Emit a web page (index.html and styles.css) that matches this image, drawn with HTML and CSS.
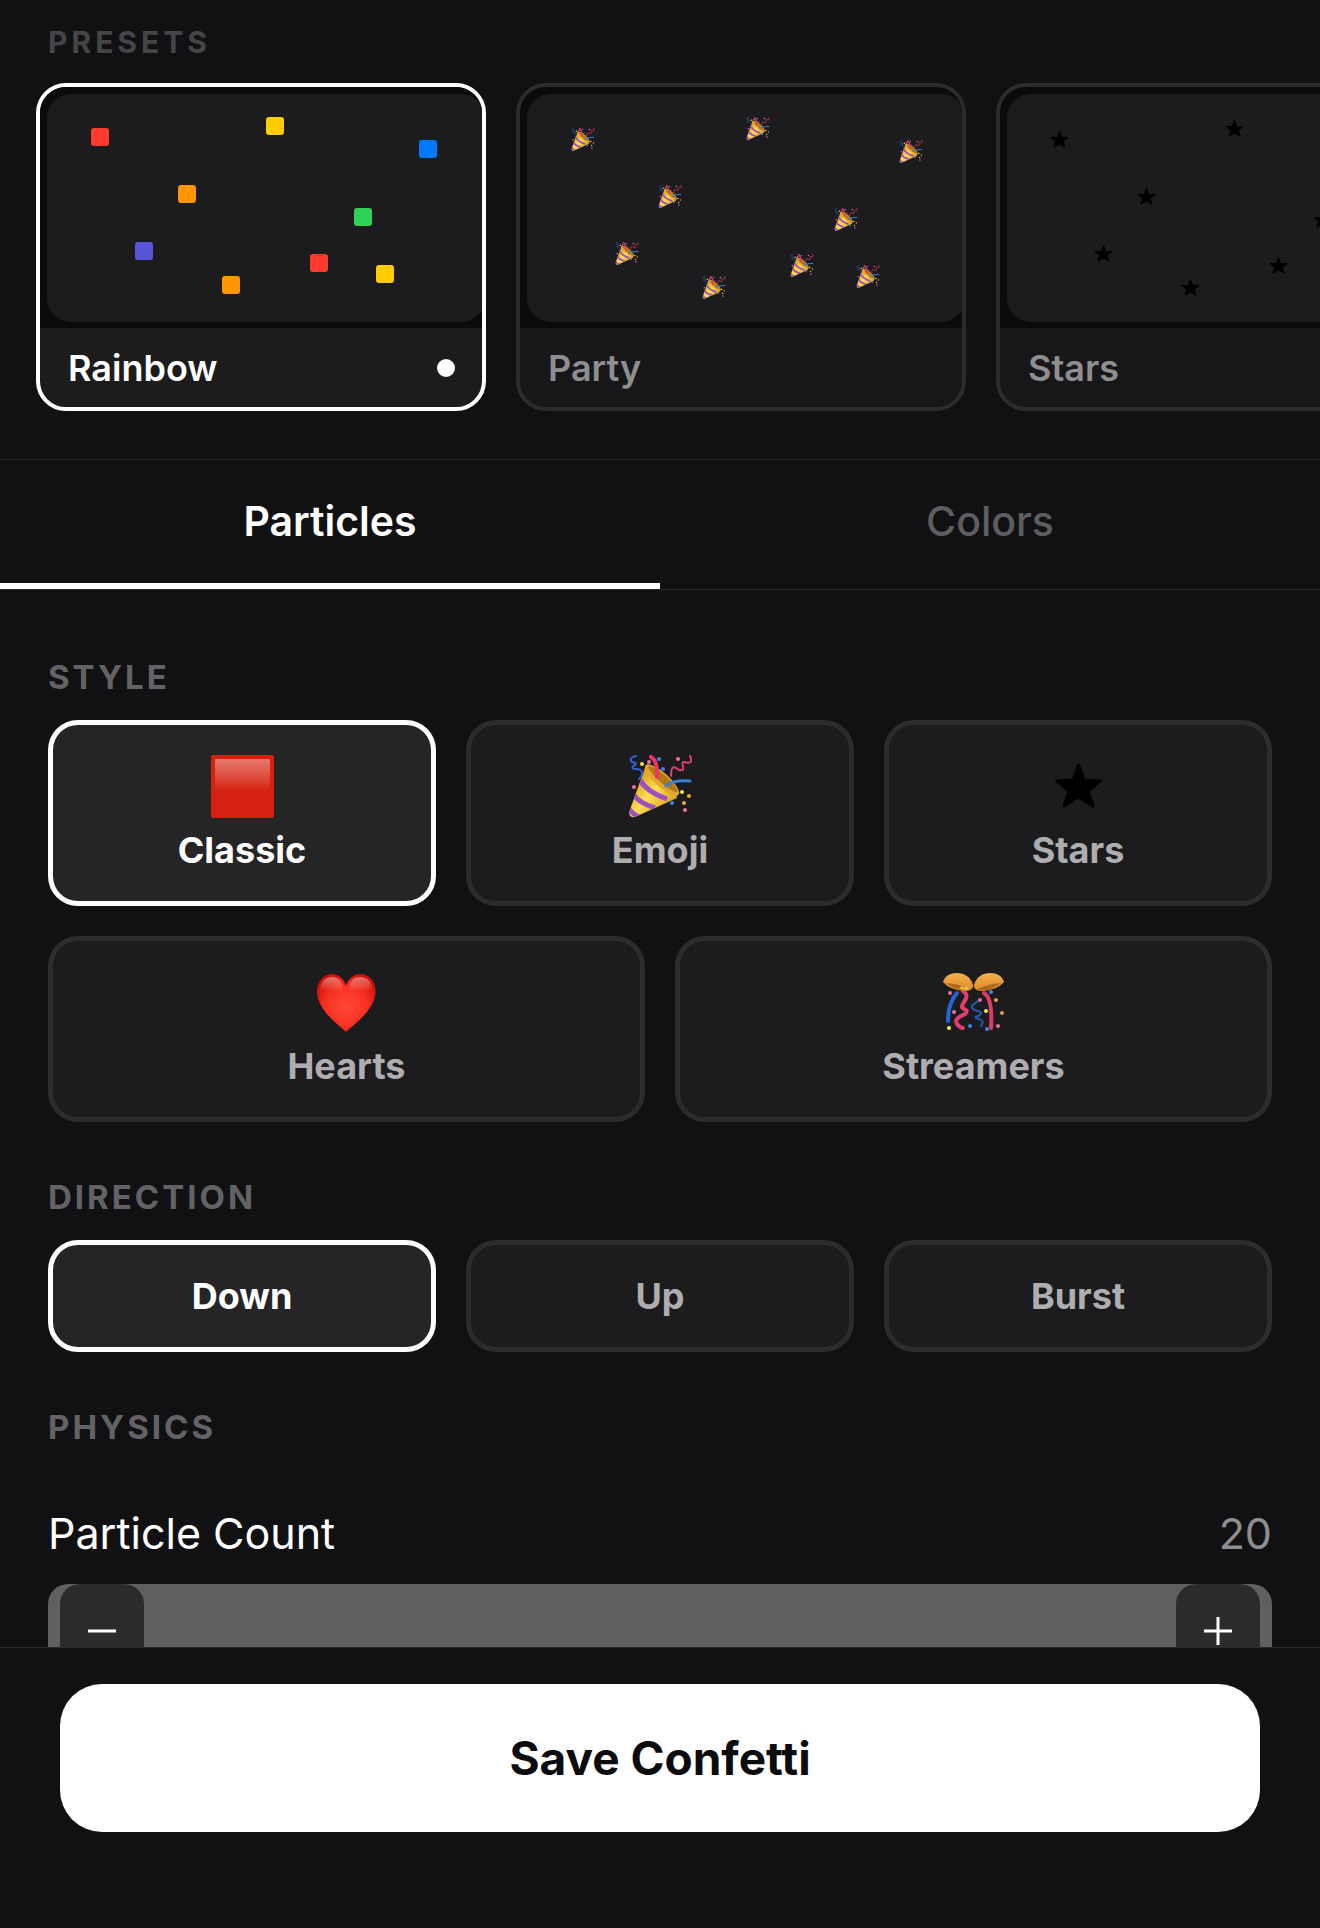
FILE: index.html
```html
<!DOCTYPE html>
<html lang="en">

<head>
    <meta charset="UTF-8">
    <meta name="viewport" content="width=device-width, initial-scale=1.0">
    <title>Confetti Editor</title>
    <link rel="stylesheet" href="styles.css">
</head>

<body>

    <!-- Shared icons -->
    <svg class="icon-defs" aria-hidden="true">
        <defs>
            <linearGradient id="gloss" x1="0" y1="0" x2="0" y2="1">
                <stop offset="0" stop-color="#fff" stop-opacity=".4" />
                <stop offset=".6" stop-color="#fff" stop-opacity=".18" />
                <stop offset="1" stop-color="#fff" stop-opacity="0" />
            </linearGradient>
            <linearGradient id="cone" x1="0" y1="0" x2="1" y2="1">
                <stop offset="0.2" stop-color="#d99a1c" />
                <stop offset="0.5" stop-color="#ffdf55" />
                <stop offset="0.85" stop-color="#d89a20" />
            </linearGradient>
            <linearGradient id="shell" x1="0" y1="0" x2="0" y2="1">
                <stop offset="0" stop-color="#f6b04a" />
                <stop offset="1" stop-color="#d98a2b" />
            </linearGradient>
            <radialGradient id="heartFill" cx=".5" cy=".55" r=".6">
                <stop offset="0" stop-color="#ff4a3a" />
                <stop offset=".6" stop-color="#f8301f" />
                <stop offset="1" stop-color="#c90f08" />
            </radialGradient>
            <clipPath id="coneClip">
                <path d="M17 10 L0.500 56 Q-.5 63 6 62 L48 43 Q48 24 17 10 Z" />
            </clipPath>
        </defs>

        <symbol id="icon-square" viewBox="0 0 63 63">
            <rect width="63" height="63" rx="2" fill="#d5210f" />
            <rect x="4" y="4" width="55" height="32" rx="1" fill="url(#gloss)" />
        </symbol>

        <symbol id="icon-popper" viewBox="0 0 63 63">
            <path d="M17 10 L0.500 56 Q-.5 63 6 62 L48 43 Q48 24 17 10 Z" fill="url(#cone)" />
            <g clip-path="url(#coneClip)" fill="none" stroke="#9b4fc4" stroke-width="5">
                <path d="M11 25 Q18 37 38 44" />
                <path d="M5 40 Q10 48 26 53" />
                <path d="M-1 52 Q2 58 10 62" />
            </g>
            <ellipse cx="33" cy="25" rx="22" ry="7" transform="rotate(42 33 25)" fill="#e2a72c" />
            <ellipse cx="34" cy="24" rx="19" ry="4" transform="rotate(42 34 24)" fill="#b3761b" />
            <g fill="none" stroke-linecap="round">
                <path d="M22 2 Q29 6 28 22" stroke="#e8365f" stroke-width="4" />
                <path d="M37 31 Q43 25 61 26" stroke="#3a7fd0" stroke-width="3" />
                <path d="M7 1 C-1 3 1 7 6 8 C10 10 0 11 5 14 C14 13 15 19 10 24" stroke="#2a62d0" stroke-width="2" />
                <path d="M61 1 C65 9 59 8 55 7 C50 7 59 17 50 15 C43 9 42 14 42 21" stroke="#e23e6e" stroke-width="2" />
            </g>
            <g fill="#f2719c">
                <circle cx="20" cy="7" r="2" />
                <circle cx="49" cy="4" r="2" />
                <circle cx="5" cy="32" r="2" />
                <circle cx="56" cy="55" r="2" />
            </g>
            <g fill="#3f86e0">
                <circle cx="30" cy="4" r="2" />
                <circle cx="34" cy="14" r="2" />
                <circle cx="43" cy="48" r="2" />
            </g>
            <g fill="#f6e04a">
                <circle cx="13" cy="9" r="2" />
                <circle cx="53" cy="37" r="2" />
            </g>
            <g fill="#eda63e">
                <circle cx="60" cy="41" r="2" />
                <circle cx="55" cy="48" r="2" />
            </g>
        </symbol>

        <symbol id="icon-star" viewBox="0 0 63 63">
            <path d="M31.500 10 L36.800 25 L53.300 26 L41 36 L46 51 L31.500 42 L17 51 L22 36 L9.700 26 L26.200 25 Z"
                fill="#000" stroke="#000" stroke-width="3" stroke-linejoin="round" />
        </symbol>

        <symbol id="icon-heart" viewBox="0 0 63 63">
            <path d="M31 61 C23 53 2 39 2 20 C2 10 9 3 17 3 C24 3 29 8 31 15 C33 8 38 3 45 3 C54 3 60.500 10 60.500 20 C60.500 39 39 53 31 61 Z"
                fill="url(#heartFill)" />
            <path d="M5 20 C5 11 10 6 17 6 C24 6 28 11 28 20 Z" fill="url(#gloss)" />
            <path d="M34 20 C34 11 38 6 45 6 C53 6 57 11 57 20 Z" fill="url(#gloss)" />
        </symbol>

        <symbol id="icon-streamers" viewBox="0 0 63 63">
            <g fill="none" stroke-linecap="round">
                <path d="M15 22 Q6 32 6 50" stroke="#2465da" stroke-width="4" />
                <path d="M21 20 C30 26 19 32 20 36 C21 39 28 38 23 43 C17 46 12 48 15 53 Q18 57 21 57" stroke="#e23e6b" stroke-width="4" />
                <path d="M36 30 C32 33 28 35 31 38 C34 41 40 39 39 43 C36 47 32 44 34 47 C39 49 43 49 39 55" stroke="#2857b8" stroke-width="2" />
                <path d="M42 22 Q51 28 49 57" stroke="#e03a66" stroke-width="4" />
            </g>
            <path d="M1 11 C4 -1 27 -2 31 14 Q32 20 22 20 Q8 19 1 11 Z" fill="url(#shell)" />
            <path d="M4 12 Q15 12 29 19 Q15 21 4 12 Z" fill="#b06a1e" />
            <path d="M62 11 C59 -1 36 -2 32 14 Q31 20 41 20 Q55 19 62 11 Z" fill="url(#shell)" />
            <path d="M59 12 Q48 12 34 19 Q48 21 59 12 Z" fill="#b06a1e" />
            <path d="M17 18 L20 15 L22 17 L25 15 L27 19 Z" fill="#f3c63c" />
            <g fill="#e8709c">
                <circle cx="8" cy="22" r="2" />
                <circle cx="12" cy="41" r="2" />
                <circle cx="38" cy="29" r="2" />
                <circle cx="56" cy="55" r="2" />
            </g>
            <g fill="#3f86e0">
                <circle cx="28" cy="55" r="2" />
                <circle cx="45" cy="58" r="2" />
                <circle cx="49" cy="21" r="2" />
            </g>
            <g fill="#f4e45a">
                <circle cx="7" cy="57" r="2" />
                <circle cx="44" cy="40" r="2" />
            </g>
            <g fill="#e99a45">
                <circle cx="54" cy="29" r="2" />
                <circle cx="60" cy="42" r="2" />
            </g>
        </symbol>
    </svg>

    <section class="presets">
        <h2 class="presets-title">PRESETS</h2>
        <div class="preset-list">
            <button type="button" class="preset active" aria-pressed="true">
                <span class="preset-preview">
                    <span class="stage">
                        <span class="particle p1 square red"></span>
                        <span class="particle p2 square yellow"></span>
                        <span class="particle p3 square blue"></span>
                        <span class="particle p4 square orange"></span>
                        <span class="particle p5 square green"></span>
                        <span class="particle p6 square purple"></span>
                        <span class="particle p7 square red"></span>
                        <span class="particle p8 square yellow"></span>
                        <span class="particle p9 square orange"></span>
                    </span>
                </span>
                <span class="preset-info">
                    <span>Rainbow</span>
                    <span class="preset-dot"></span>
                </span>
            </button>
            <button type="button" class="preset" aria-pressed="false">
                <span class="preset-preview">
                    <span class="stage">
                        <svg class="particle p1 emoji"><use href="#icon-popper" /></svg>
                        <svg class="particle p2 emoji"><use href="#icon-popper" /></svg>
                        <svg class="particle p3 emoji"><use href="#icon-popper" /></svg>
                        <svg class="particle p4 emoji"><use href="#icon-popper" /></svg>
                        <svg class="particle p5 emoji"><use href="#icon-popper" /></svg>
                        <svg class="particle p6 emoji"><use href="#icon-popper" /></svg>
                        <svg class="particle p7 emoji"><use href="#icon-popper" /></svg>
                        <svg class="particle p8 emoji"><use href="#icon-popper" /></svg>
                        <svg class="particle p9 emoji"><use href="#icon-popper" /></svg>
                    </span>
                </span>
                <span class="preset-info"><span>Party</span></span>
            </button>
            <button type="button" class="preset" aria-pressed="false">
                <span class="preset-preview">
                    <span class="stage">
                        <svg class="particle p1 star" viewBox="9 7 45 48"><use href="#icon-star" width="63" height="63" /></svg>
                        <svg class="particle p2 star" viewBox="9 7 45 48"><use href="#icon-star" width="63" height="63" /></svg>
                        <svg class="particle p3 star" viewBox="9 7 45 48"><use href="#icon-star" width="63" height="63" /></svg>
                        <svg class="particle p4 star" viewBox="9 7 45 48"><use href="#icon-star" width="63" height="63" /></svg>
                        <svg class="particle p5 star" viewBox="9 7 45 48"><use href="#icon-star" width="63" height="63" /></svg>
                        <svg class="particle p6 star" viewBox="9 7 45 48"><use href="#icon-star" width="63" height="63" /></svg>
                        <svg class="particle p7 star" viewBox="9 7 45 48"><use href="#icon-star" width="63" height="63" /></svg>
                        <svg class="particle p8 star" viewBox="9 7 45 48"><use href="#icon-star" width="63" height="63" /></svg>
                        <svg class="particle p9 star" viewBox="9 7 45 48"><use href="#icon-star" width="63" height="63" /></svg>
                    </span>
                </span>
                <span class="preset-info"><span>Stars</span></span>
            </button>
        </div>
    </section>

    <div class="tabs" role="tablist">
        <button type="button" class="tab active" role="tab" aria-selected="true">Particles</button>
        <button type="button" class="tab" role="tab" aria-selected="false">Colors</button>
    </div>

    <main class="panel">
        <h2 class="section-title">STYLE</h2>
        <div class="options">
            <button type="button" class="option active" aria-pressed="true">
                <svg class="option-icon"><use href="#icon-square" /></svg>
                <span>Classic</span>
            </button>
            <button type="button" class="option" aria-pressed="false">
                <svg class="option-icon"><use href="#icon-popper" /></svg>
                <span>Emoji</span>
            </button>
            <button type="button" class="option" aria-pressed="false">
                <svg class="option-icon"><use href="#icon-star" /></svg>
                <span>Stars</span>
            </button>
            <button type="button" class="option wide" aria-pressed="false">
                <svg class="option-icon"><use href="#icon-heart" /></svg>
                <span>Hearts</span>
            </button>
            <button type="button" class="option wide" aria-pressed="false">
                <svg class="option-icon"><use href="#icon-streamers" /></svg>
                <span>Streamers</span>
            </button>
        </div>

        <h2 class="section-title">DIRECTION</h2>
        <div class="options">
            <button type="button" class="option active" aria-pressed="true">Down</button>
            <button type="button" class="option" aria-pressed="false">Up</button>
            <button type="button" class="option" aria-pressed="false">Burst</button>
        </div>

        <h2 class="section-title">PHYSICS</h2>
        <div class="setting">
            <div class="setting-header">
                <span id="count-label">Particle Count</span>
                <output class="setting-value" aria-labelledby="count-label">20</output>
            </div>
            <div class="stepper" role="group" aria-labelledby="count-label">
                <button type="button" class="step" aria-label="Decrease">
                    <svg class="step-icon" viewBox="0 0 28 28"><path d="M0 14 H28" /></svg>
                </button>
                <button type="button" class="step" aria-label="Increase">
                    <svg class="step-icon" viewBox="0 0 28 28"><path d="M0 14 H28 M14 0 V28" /></svg>
                </button>
            </div>
        </div>
    </main>

    <footer class="save-bar">
        <button type="button" class="save-button">Save Confetti</button>
    </footer>

</body>

</html>
```
FILE: styles.css
```css
* {
    box-sizing: border-box;
}

body {
    margin: 0;
    height: 100vh;
    display: flex;
    flex-direction: column;
    overflow: hidden;
    background-color: #111113;
    color: #ffffff;
    font-family: Inter, "Liberation Sans", sans-serif;
}

button {
    margin: 0;
    padding: 0;
    border: none;
    background: none;
    color: inherit;
    font-family: inherit;
    cursor: pointer;
}

h2 {
    margin: 0;
}

.icon-defs {
    position: absolute;
    width: 0;
    height: 0;
}

/* Presets */
.presets {
    flex: none;
    padding: 24px 0 48px;
    border-bottom: 1px solid #2a2a2c;
}

.presets-title {
    margin: 0 48px 23px;
    color: #454547;
    font-size: 30px;
    font-weight: 700;
    line-height: 36px;
    letter-spacing: 4px;
}

.preset-list {
    display: flex;
    gap: 30px;
    padding: 0 36px;
    overflow-x: auto;
    scrollbar-width: none;
}

.preset {
    flex: 0 0 450px;
    display: flex;
    flex-direction: column;
    overflow: hidden;
    border: 4px solid #2c2c2e;
    border-radius: 30px;
    background-color: #171719;
    color: #8e8e91;
    font-size: 36px;
    font-weight: 600;
}

.preset.active {
    border-color: #ffffff;
    background-color: #1c1c1d;
    color: #ffffff;
}

.preset-preview {
    align-self: stretch;
    padding: 7px 0 6px 7px;
    background-color: #0b0b0d;
}

/* The stage runs under the right edge of the card */
.stage {
    position: relative;
    display: block;
    height: 228px;
    margin-right: -3px;
    border-radius: 24px;
    background-color: #1c1c1f;
}

.preset-info {
    align-self: stretch;
    display: flex;
    align-items: center;
    justify-content: space-between;
    padding: 18px 27px 17px 28px;
    line-height: 44px;
}

.preset-dot {
    width: 18px;
    height: 18px;
    border-radius: 50%;
    background-color: #ffffff;
}

/* Particle positions inside a preview */
.particle { position: absolute; }
.p1 { left: 10%; top: 15%; }
.p2 { left: 50%; top: 10%; }
.p3 { left: 85%; top: 20%; }
.p4 { left: 30%; top: 40%; }
.p5 { left: 70%; top: 50%; }
.p6 { left: 20%; top: 65%; }
.p7 { left: 60%; top: 70%; }
.p8 { left: 75%; top: 75%; }
.p9 { left: 40%; top: 80%; }

.square {
    width: 18px;
    height: 18px;
    border-radius: 3px;
}

.emoji {
    width: 24px;
    height: 23px;
}

.star {
    width: 17px;
    height: 23px;
}

.red { background-color: #ff3b30; }
.yellow { background-color: #ffcc00; }
.blue { background-color: #007aff; }
.orange { background-color: #ff9500; }
.green { background-color: #30d158; }
.purple { background-color: #5856d6; }

/* Tabs */
.tabs {
    flex: none;
    display: flex;
    border-bottom: 1px solid #2a2a2c;
}

.tab {
    flex: 1;
    padding: 35px 0 36px;
    border-bottom: 6px solid transparent;
    color: #5e5e61;
    font-size: 41px;
    font-weight: 500;
    line-height: 52px;
}

.tab.active {
    border-bottom-color: #ffffff;
    color: #ffffff;
    font-weight: 600;
}

/* Settings panel */
.panel {
    flex: 1;
    min-height: 0;
    padding: 12px 48px 48px;
    overflow-y: auto;
    scrollbar-width: none;
}

.section-title {
    margin: 54px 0 22px;
    color: #636365;
    font-size: 33px;
    font-weight: 700;
    line-height: 42px;
    letter-spacing: 3px;
}

.options {
    display: grid;
    grid-template-columns: repeat(6, 1fr);
    gap: 30px;
}

.option {
    grid-column: span 2;
    display: flex;
    flex-direction: column;
    align-items: center;
    gap: 11px;
    padding: 30px 0;
    border: 5px solid #2c2c2e;
    border-radius: 30px;
    background-color: #1c1c1e;
    color: #aeaeb0;
    font-size: 36px;
    font-weight: 700;
    line-height: 42px;
}

.option.wide {
    grid-column: span 3;
}

.option.active {
    border-color: #ffffff;
    background-color: #252527;
    color: #ffffff;
}

.option-icon {
    width: 63px;
    height: 63px;
}

.setting {
    padding-top: 36px;
}

.setting-header {
    display: flex;
    justify-content: space-between;
    margin-bottom: 24px;
    font-size: 43px;
    line-height: 54px;
}

.setting-value {
    color: #8e8e91;
}

.stepper {
    display: flex;
    justify-content: space-between;
    padding: 0 12px;
    border-radius: 20px;
    background-color: #606060;
}

.step {
    width: 84px;
    height: 93px;
    display: flex;
    align-items: center;
    justify-content: center;
    border-radius: 20px;
    background-color: #2c2c2e;
}

.step-icon {
    width: 28px;
    height: 28px;
    fill: none;
    stroke: #ffffff;
    stroke-width: 3;
}

/* Save bar */
.save-bar {
    flex: none;
    padding: 36px 60px 96px;
    border-top: 1px solid #2a2a2c;
}

.save-button {
    display: block;
    width: 100%;
    padding: 45px 0;
    border-radius: 42px;
    background-color: #ffffff;
    color: #0b0b0d;
    font-size: 46px;
    font-weight: 700;
    line-height: 58px;
}
```
